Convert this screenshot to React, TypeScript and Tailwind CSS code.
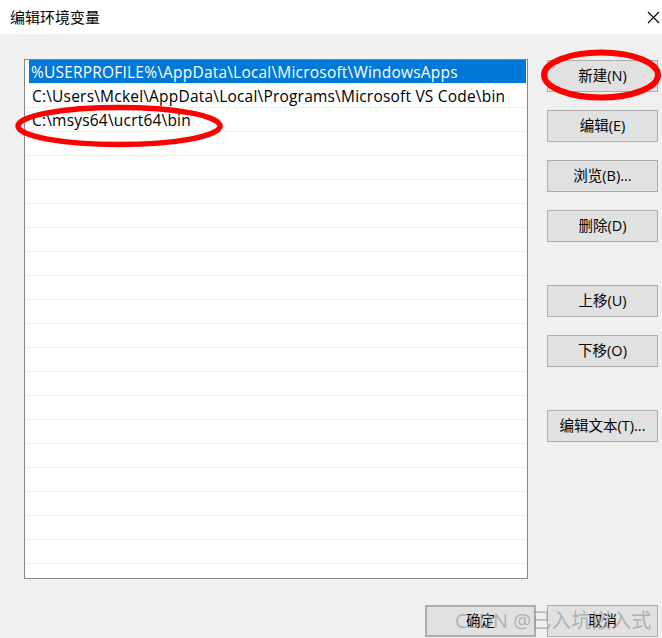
const ui = { fontFamily: '"Open Sans", "Noto Sans CJK SC", sans-serif' };

const paths = [
  "%USERPROFILE%\\AppData\\Local\\Microsoft\\WindowsApps",
  "C:\\Users\\Mckel\\AppData\\Local\\Programs\\Microsoft VS Code\\bin",
  "C:\\msys64\\ucrt64\\bin",
];

function Btn({ label, className = "" }: { label: string; className?: string }) {
  return (
    <button
      className={`flex h-[32px] w-[111px] items-center justify-center border border-[#adadad] bg-[#e1e1e1] text-[14.5px] text-black ${className}`}
    >
      {label}
    </button>
  );
}

export default function App() {
  const rows = Array.from({ length: 22 }, (_, i) => paths[i] ?? "");
  return (
    <div className="relative flex h-[638px] w-[662px] flex-col overflow-hidden bg-[#f0f0f0]" style={ui}>
      {/* title bar */}
      <div className="flex h-[34px] items-center justify-between bg-white pl-[10px] pr-[1px]">
        <span className="text-[15px] text-black">编辑环境变量</span>
        <svg width="13" height="13" viewBox="0 0 13 13" className="mr-[1px]">
          <path d="M1 1 L12 12 M12 1 L1 12" stroke="#000" strokeWidth="1.1" />
        </svg>
      </div>

      <div className="flex pl-[24px] pt-[25px]">
        {/* list */}
        <div className="h-[520px] w-[504px] overflow-hidden border border-[#828790] bg-white">
          {rows.map((p, i) => (
            <div
              key={i}
              className={`flex h-[24px] items-center border-b border-[#f0f0f0] pt-[2px] text-[15.5px] tracking-[0.2px] whitespace-nowrap ${
                i === 0 ? "ml-[4px] mr-px bg-[#0078d7] pl-[2px] text-white" : "mx-px pl-[6px] text-black"
              }`}
            >
              {p}
            </div>
          ))}
        </div>

        {/* side buttons */}
        <div className="ml-[19px] flex flex-col pt-[1px]">
          <div className="flex flex-col gap-[18px]">
            <Btn label="新建(N)" />
            <Btn label="编辑(E)" />
            <Btn label="浏览(B)..." />
            <Btn label="删除(D)" />
          </div>
          <div className="mt-[43px] flex flex-col gap-[18px]">
            <Btn label="上移(U)" />
            <Btn label="下移(O)" />
          </div>
          <Btn label="编辑文本(T)..." className="mt-[43px]" />
        </div>
      </div>

      {/* bottom buttons */}
      <div className="flex justify-end gap-[11px] pr-[4px] pt-[26px]">
        <Btn label="确定" className="border-2 border-[#0078d7]" />
        <Btn label="取消" />
      </div>

      {/* annotations */}
      <svg className="pointer-events-none absolute left-0 top-0" width="662" height="638">
        <ellipse cx="601" cy="75" rx="57" ry="22.5" fill="none" stroke="#ff0000" strokeWidth="6" />
        <ellipse cx="119" cy="126" rx="101" ry="18.5" fill="none" stroke="#ff0000" strokeWidth="5.5" />
      </svg>
      <div className="pointer-events-none absolute left-[455px] top-[606px] text-[20px] text-[#9a9a9a]/70">
        CSDN @已入坑嵌入式
      </div>
    </div>
  );
}
